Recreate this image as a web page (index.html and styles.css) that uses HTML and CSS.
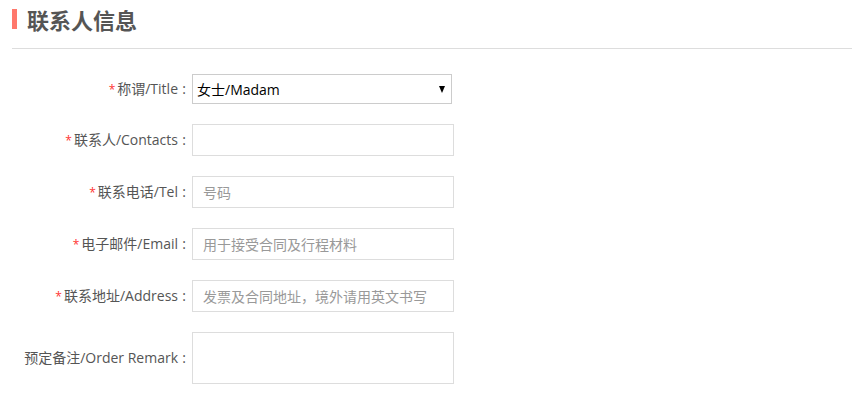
FILE: index.html
```html
<!DOCTYPE html>
<html>
<head>
  <meta charset="utf-8">
  <title>联系人信息</title>
  <link rel="stylesheet" href="styles.css">
</head>
<body>
  <div class="panel">
    <h2 class="section-title"><span class="bar"></span>联系人信息</h2>

    <form class="contact-form">
      <div class="row">
        <label class="label"><span class="req">*</span>称谓/Title<span class="colon">:</span></label>
        <div class="select-wrap">
          <select class="field select">
            <option>女士/Madam</option>
            <option>先生/Sir</option>
          </select>
        </div>
      </div>
      <div class="row">
        <label class="label"><span class="req">*</span>联系人/Contacts<span class="colon">:</span></label>
        <input class="field" type="text">
      </div>
      <div class="row">
        <label class="label"><span class="req">*</span>联系电话/Tel<span class="colon">:</span></label>
        <input class="field" type="text" placeholder="号码">
      </div>
      <div class="row">
        <label class="label"><span class="req">*</span>电子邮件/Email<span class="colon">:</span></label>
        <input class="field" type="text" placeholder="用于接受合同及行程材料">
      </div>
      <div class="row">
        <label class="label"><span class="req">*</span>联系地址/Address<span class="colon">:</span></label>
        <input class="field" type="text" placeholder="发票及合同地址，境外请用英文书写">
      </div>
      <div class="row">
        <label class="label">预定备注/Order Remark<span class="colon">:</span></label>
        <textarea class="field remark"></textarea>
      </div>
    </form>
  </div>
</body>
</html>
```

FILE: styles.css
```css
body { margin: 0; background: #fff; font-family: "Noto Sans CJK SC", "Open Sans", sans-serif; color: #555; }
.panel { padding: 0 11px 0 12px; }
.section-title { display: flex; align-items: center; margin: 0; padding: 9px 0 19px; line-height: 20px; font-size: 22px; font-weight: bold; color: #555; border-bottom: 1px solid #ddd; }
.bar { width: 5px; height: 20px; background: #ff786c; margin-right: 10px; }
.contact-form { margin-top: 25px; }
.row { display: flex; align-items: center; margin-bottom: 20px; }
.label { width: 178px; margin-right: 2px; text-align: right; font-family: "Open Sans", "Noto Sans CJK SC", sans-serif; font-size: 14px; line-height: 18px; color: #555; white-space: nowrap; }
.colon { display: inline-block; width: 12px; text-align: center; }
.req { color: #f33; font-size: 12px; margin-right: 2px; }
.field { box-sizing: border-box; width: 262px; height: 32px; border: 1px solid #ddd; padding: 0 10px; font-family: inherit; font-size: 14px; color: #333; background: #fff; outline: none; }
.field::placeholder { color: #999; }
.select-wrap { position: relative; }
.select { width: 260px; height: 30px; border-color: #ccc; padding: 0 4px; color: #000; font-family: "Open Sans", "Noto Sans CJK SC", sans-serif; appearance: none; -webkit-appearance: none; border-radius: 0; }
.select-wrap::after { content: ""; position: absolute; right: 7px; top: 12px; border-left: 3px solid transparent; border-right: 3px solid transparent; border-top: 7px solid #000; }
.remark { height: 52px; resize: none; padding: 6px 10px; }
```
